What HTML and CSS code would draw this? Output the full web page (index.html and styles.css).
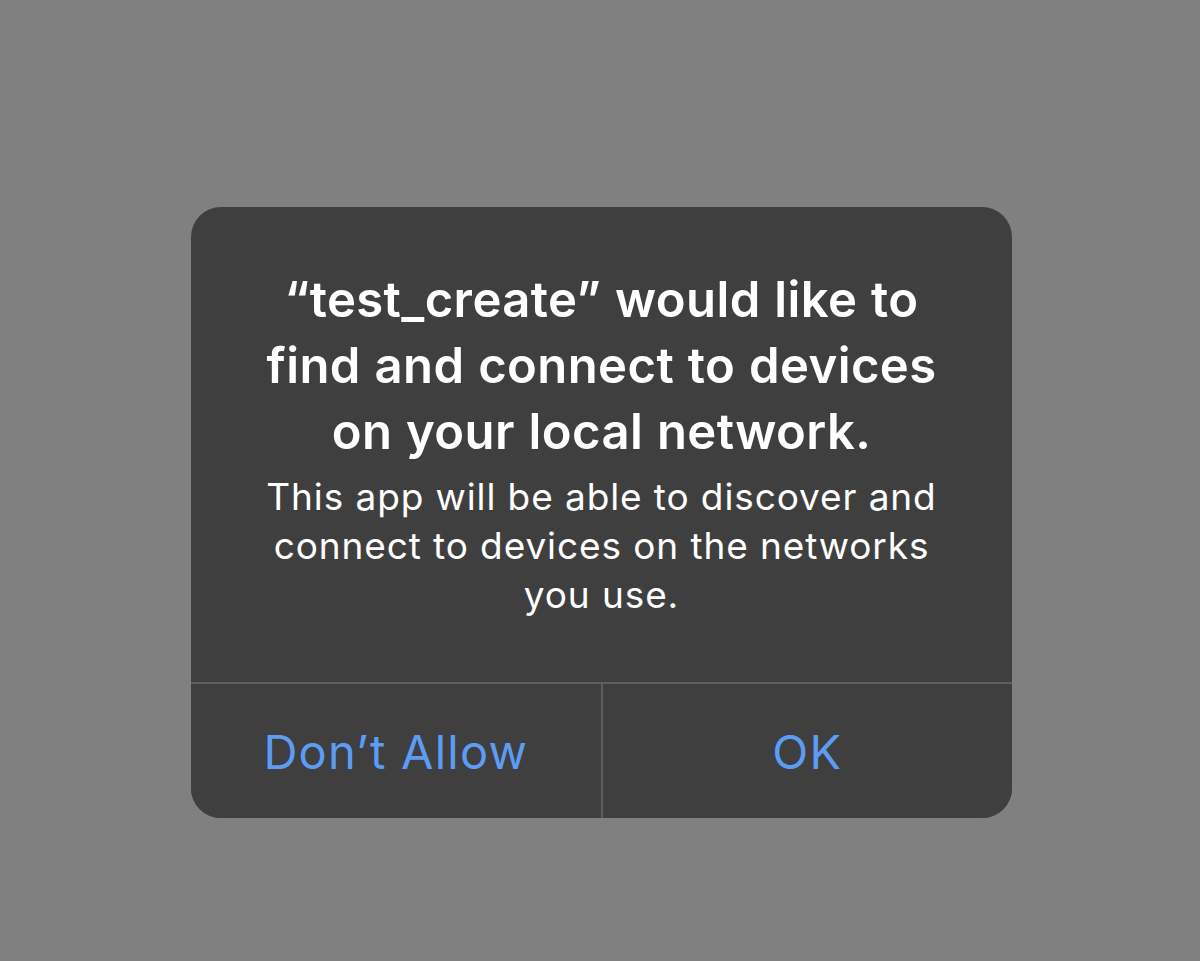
FILE: index.html
```html
<!DOCTYPE html>
<html>
  <head>
    <meta charset="utf-8" />
    <title>Local Network</title>
    <meta name="viewport" content="width=device-width, initial-scale=1" />
    <link rel="stylesheet" href="styles.css">
  </head>

  <body class="alert-body">
    <div class="alert-page">
      <div class="alert">
        <div class="alert-content">
          <p class="alert-title">“test_create” would like to find and connect to devices on your local network.</p>
          <p class="alert-message">This app will be able to discover and connect to devices on the networks you use.</p>
        </div>

        <div class="alert-actions">
          <button class="alert-button">Don’t Allow</button>
          <button class="alert-button">OK</button>
        </div>
      </div>
    </div>
  </body>
</html>
```

FILE: styles.css
```css
.alert-body {
  margin: 0;
  height: 961px;
  background: #808080;
  font-family: "Inter", "Noto Sans", sans-serif;
  -webkit-font-smoothing: antialiased;
}

.alert-page {
  padding: 207px 0 0 191px;
}

.alert {
  width: 821px;
  background: #3f3f3f;
  border-radius: 30px;
  overflow: hidden;
}

.alert-content {
  padding: 60px 60px 63px;
  text-align: center;
  color: #ffffff;
}

.alert-title {
  margin: 0 0 7px;
  font-size: 49px;
  line-height: 66px;
  font-weight: 600;
  letter-spacing: 0.4px;
  word-spacing: 1px;
}

.alert-message {
  margin: 0;
  font-size: 37px;
  line-height: 49px;
  letter-spacing: 0.9px;
}

.alert-actions {
  display: grid;
  grid-template-columns: 1fr 1fr;
  gap: 2px;
  border-top: 2px solid #5e5e5e;
  background: #5e5e5e;
}

.alert-button {
  height: 134px;
  border: 0;
  padding: 0;
  background: #3f3f3f;
  color: #5c9cf5;
  font-family: inherit;
  font-size: 47px;
  letter-spacing: 1.2px;
  cursor: pointer;
}
```
